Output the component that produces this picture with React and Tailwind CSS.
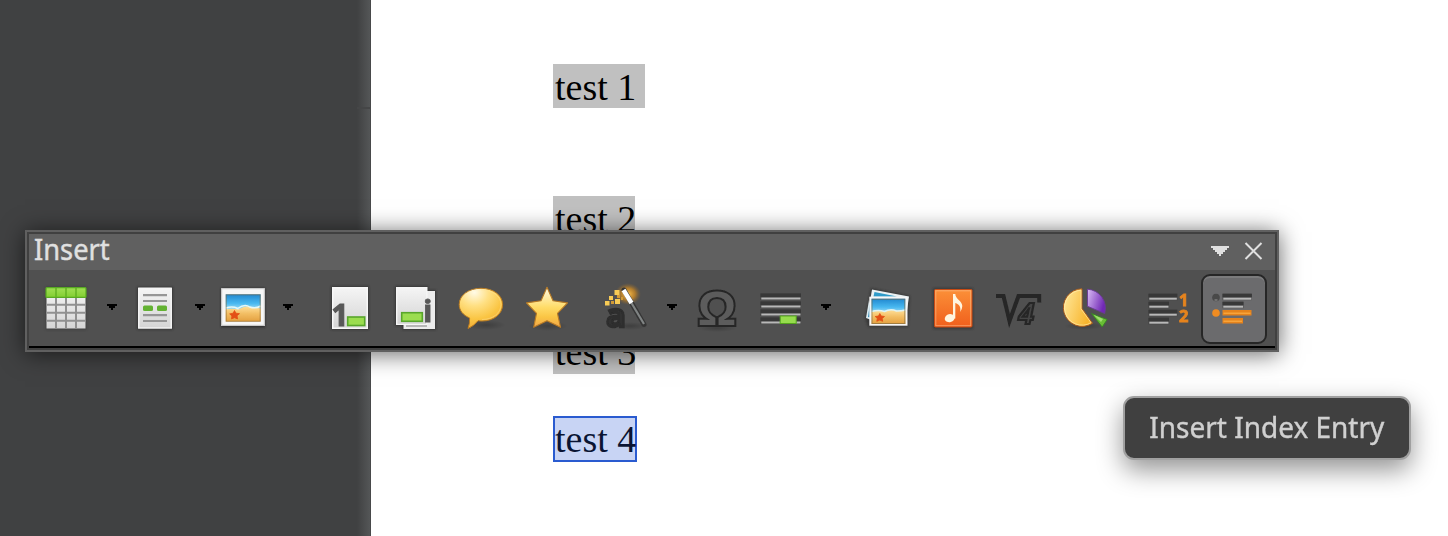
import React from "react";

function Icon({ children, className = "" }) {
  return (
    <svg viewBox="0 0 48 48" className={"h-12 w-12 shrink-0 overflow-visible " + className}>
      {children}
    </svg>
  );
}

function Drop() {
  return (
    <svg viewBox="0 0 40 48" className="h-12 w-10 shrink-0" shapeRendering="crispEdges">
      <path d="M17 20h10v2h-2v2h-2v2h-2v-2h-2v-2h-2z" fill="#000" />
    </svg>
  );
}

function Defs() {
  return (
    <svg className="absolute h-0 w-0">
      <defs>
        <linearGradient id="paper" x2="0" y2="1"><stop stopColor="#f4f4f4" /><stop offset="1" stopColor="#d5d5d5" /></linearGradient>
        <linearGradient id="head" x2="0" y2="1"><stop stopColor="#a0df55" /><stop offset="1" stopColor="#82cf30" /></linearGradient>
        <linearGradient id="sky" x2="0" y2="1"><stop stopColor="#2087cf" /><stop offset=".6" stopColor="#48b8f0" /><stop offset="1" stopColor="#9fdcf5" /></linearGradient>
        <linearGradient id="sand" x2="0" y2="1"><stop stopColor="#ffe09a" /><stop offset=".5" stopColor="#f2bd62" /><stop offset="1" stopColor="#e3a040" /></linearGradient>
        <linearGradient id="gold" x2="0" y2="1"><stop stopColor="#fffbe5" /><stop offset=".5" stopColor="#ffdc68" /><stop offset=".75" stopColor="#fac544" /><stop offset="1" stopColor="#f0a54a" /></linearGradient>
        <radialGradient id="bubble" cx=".35" cy=".1" r=".95"><stop stopColor="#fffbe8" /><stop offset=".35" stopColor="#ffe084" /><stop offset=".7" stopColor="#fac543" /><stop offset="1" stopColor="#efa936" /></radialGradient>
        <radialGradient id="glow"><stop stopColor="#ffc04a" /><stop offset=".55" stopColor="#c68625" stopOpacity=".8" /><stop offset="1" stopColor="#8a6530" stopOpacity="0" /></radialGradient>
        <linearGradient id="orange" x2="0" y2="1"><stop stopColor="#fb9038" /><stop offset="1" stopColor="#f05f1c" /></linearGradient>
        <linearGradient id="pie" x2="1" y2=".4"><stop stopColor="#ffeaa0" /><stop offset="1" stopColor="#f8b52d" /></linearGradient>
        <linearGradient id="violet" x2="1" y2=".4"><stop stopColor="#d9bdf5" /><stop offset="1" stopColor="#7128b5" /></linearGradient>
        <radialGradient id="shade"><stop stopColor="#000" stopOpacity=".22" /><stop offset="1" stopColor="#000" stopOpacity="0" /></radialGradient>
        <filter id="soft" x="-20%" y="-20%" width="140%" height="140%"><feGaussianBlur stdDeviation=".5" /></filter>
        <filter id="haze" x="-20%" y="-20%" width="140%" height="140%"><feGaussianBlur stdDeviation="1.2" /></filter>
      </defs>
    </svg>
  );
}

function TableIcon() {
  return (
    <Icon>
      <rect x="3.5" y="2.8" width="41" height="43" rx="1" fill="#303030" opacity=".5" filter="url(#haze)" />
      <g filter="url(#soft)">
        <rect x="4.5" y="4" width="39" height="40.5" fill="url(#paper)" />
        <path d="M13.500 13v31.500M23.500 13v31.500M33.500 13v31.500M4.500 20.700h39M4.500 28.700h39M4.500 36.700h39" stroke="#909090" strokeWidth="2" transform="translate(.5 0)" fill="none" />
        <rect x="4" y="3.600" width="40" height="9.800" rx="1" fill="url(#head)" stroke="#58aa20" strokeWidth="1.200" />
        <path d="M14 4v9M24 4v9M34 4v9" stroke="#62b322" strokeWidth="1.500" />
      </g>
    </Icon>
  );
}

function HeaderIcon() {
  return (
    <Icon>
      <rect x="7" y="2.800" width="36" height="43" rx="1" fill="#282828" opacity=".6" filter="url(#haze)" />
      <g filter="url(#soft)">
        <rect x="8" y="3.400" width="34" height="41.300" rx=".5" fill="#f4f4f4" />
        <rect x="9.500" y="5" width="31" height="38.300" fill="url(#paper)" />
        <path d="M13 11.200h24M13 17h24M13 31.200h24M13 37h24" stroke="#969696" strokeWidth="2.200" />
        <rect x="13" y="21.500" width="10" height="5.500" rx="1.500" fill="#64b233" />
        <rect x="27" y="21.500" width="10" height="5.500" rx="1.500" fill="#64b233" />
      </g>
    </Icon>
  );
}

function PictureIcon() {
  return (
    <Icon>
      <rect x="3" y="4" width="44" height="39.500" fill="#202020" opacity=".7" filter="url(#haze)" />
      <rect x="3" y="4" width="44" height="38" rx=".5" fill="#c8c8c8" />
      <rect x="4.200" y="5.200" width="41.600" height="35.600" fill="#f7f7f7" />
      <g filter="url(#soft)">
        <rect x="7.700" y="10.300" width="35" height="15" fill="url(#sky)" />
        <path d="M7.700 25.500q6-1.500 13 0q7-4 10-3l12 2v13h-35z" fill="url(#sand)" />
        <path d="M7.700 24q7-2 12 .5q7-5 12-1.500q6 2 11-1" fill="none" stroke="#e5f8f8" strokeWidth="1.500" />
        <path d="M16.500 26.500l1.400 2.700 3.600.5-2.500 2 .6 3.200-3.100-1.200-3 1.200.4-3-2.200-2 3.400-.7z" fill="#e34f14" stroke="#e34f14" strokeWidth=".8" />
        <rect x="8.200" y="10.800" width="34" height="26.500" fill="none" stroke="#84602c" strokeOpacity=".55" />
      </g>
    </Icon>
  );
}

function FootnoteIcon() {
  return (
    <Icon>
      <rect x="5" y="2" width="38" height="44" rx="1" fill="#282828" opacity=".55" filter="url(#haze)" />
      <g filter="url(#soft)">
        <rect x="6" y="3" width="36" height="42" fill="#f8f8f8" />
        <rect x="7.500" y="4.500" width="33" height="39" fill="url(#paper)" />
        <text x="5.500" y="41.500" fontSize="29.500" fontWeight="700" fill="#585858" stroke="#585858" strokeWidth="1.200" className="font-['Open_Sans',sans-serif]">1</text>
        <rect x="21.700" y="33" width="17" height="8.500" fill="#9bdd50" stroke="#58a62a" strokeWidth="1.600" />
      </g>
    </Icon>
  );
}

function EndnoteIcon() {
  return (
    <Icon>
      <path d="M3 2h33v4h8v40h-34v-4h-7z" fill="#282828" opacity=".6" filter="url(#haze)" />
      <g filter="url(#soft)">
        <rect x="11.500" y="7" width="31.500" height="38" fill="#ececec" />
        <path d="M14 42h21" stroke="#a5a5a5" strokeWidth="1.500" />
        <rect x="4" y="3" width="31.500" height="38" fill="#f6f6f6" />
        <rect x="5.400" y="4.400" width="28.800" height="35.400" fill="url(#paper)" />
        <text x="31" y="38" fontSize="31" fontWeight="700" fill="#585858" stroke="#585858" strokeWidth=".8" className="font-['Open_Sans',sans-serif]">i</text>
        <rect x="9.700" y="28.700" width="20.600" height="8.600" fill="#9bdd50" stroke="#58a62a" strokeWidth="1.600" />
      </g>
    </Icon>
  );
}

function CommentIcon() {
  return (
    <Icon>
      <ellipse cx="28" cy="41" rx="20" ry="5" fill="url(#shade)" />
      <path d="M23 4.300C35 4.300 44.600 11 44.600 20.500S36 37 24 37q-2 0-4-.3Q16 42 10 44.500q2-5 1.600-10.500C5 31 1.200 26.500 1.200 20.500 1.200 11 11 4.300 23 4.300z" fill="url(#bubble)" stroke="#b97b22" strokeWidth="1" />
      <path d="M23 5.800C34 5.800 43 12 43 20.500S35 35.500 24 35.500" fill="none" stroke="#ffe59a" strokeOpacity=".45" />
    </Icon>
  );
}

function StarIcon() {
  return (
    <Icon>
      <ellipse cx="24" cy="42" rx="20" ry="5" fill="url(#shade)" />
      <path d="M23 3.200L29 16.700l14.500 2.200-10 10.400 3 14-13.500-6.500-13.300 6.500 2.800-14L2.500 18.900 17 16.700z" fill="url(#gold)" stroke="#b87a25" strokeWidth="1.100" strokeLinejoin="round" />
    </Icon>
  );
}

function AutoTextIcon() {
  return (
    <Icon>
      <ellipse cx="26" cy="10" rx="13" ry="11" fill="url(#glow)" />
      <ellipse cx="28" cy="42" rx="18" ry="4" fill="url(#shade)" />
      <g filter="url(#soft)">
        <text x="4" y="42.500" fontSize="33" fontWeight="700" fill="#303030" stroke="#2d2d2d" strokeWidth="2.400" className="font-['Open_Sans',sans-serif]">a</text>
        <path d="M22 6L42 40.500" stroke="#353535" strokeWidth="5" strokeLinecap="round" />
        <path d="M22 6.500L42 40" stroke="#808484" strokeWidth="2.200" />
        <path d="M21.500 6L29.500 19" stroke="#fff" strokeWidth="4.500" />
        <path d="M3 17h4.500v4.500H3zM7 12h4v4H7zM12.500 6h5v5h-5zM13 15h5v5h-5z" fill="#f8cb55" />
        <path d="M9 17h3v3h-3zM15 11h3v3h-3zM19 13h2v3h-2z" fill="#d19a36" />
      </g>
    </Icon>
  );
}

function OmegaIcon() {
  return (
    <Icon>
      <ellipse cx="25" cy="44" rx="20" ry="4" fill="url(#shade)" />
      <g filter="url(#soft)">
        <text x="25" y="41" textAnchor="middle" fontSize="48" fontWeight="700" fill="#5c5c5c" stroke="#262626" strokeWidth="4" className="font-['Liberation_Sans',sans-serif] [paint-order:stroke]">Ω</text>
      </g>
    </Icon>
  );
}

function Bar({ x, y, w, hot }) {
  return hot ? (
    <>
      <rect x={x} y={y} width={w} height="5.500" fill="#e5831e" />
      <rect x={x + 1} y={y + 2.500} width={w - 2} height="1.500" fill="#f6a33b" />
    </>
  ) : (
    <>
      <rect x={x} y={y} width={w} height="6.500" fill="#333" opacity=".5" />
      <rect x={x} y={y} width={w} height="3.600" fill="#383838" />
      <rect x={x + 0.8} y={y + 4} width={w - 1.3} height="2" fill="#b8b8b8" />
    </>
  );
}

function LinesIcon() {
  return (
    <Icon>
      <g filter="url(#soft)">
        <Bar x={4.5} y={9.500} w={40.500} />
        <Bar x={4.5} y={17.500} w={40.500} />
        <Bar x={4.5} y={25.500} w={40.500} />
        <Bar x={4.5} y={33.500} w={40.500} />
        <rect x="24.200" y="32" width="16" height="7.500" fill="#96dc4e" stroke="#54a51f" strokeWidth="1" />
      </g>
    </Icon>
  );
}

function GalleryIcon() {
  return (
    <Icon>
      <path d="M7 4L46 12l-2 31H4L1 34z" fill="#202020" opacity=".5" filter="url(#haze)" />
      <path d="M5 16L2 34l8 3z" fill="#dcebf0" />
      <path d="M6 19L4 33l5 1z" fill="#3489b3" />
      <path d="M8 5.500L45 12.500l-2 14L5.500 20z" fill="#e9f0f2" />
      <path d="M10.500 8L33 12.500H9.500z" fill="#2f9bc9" />
      <rect x="5.300" y="12.700" width="38.200" height="29" fill="#f7f7f7" />
      <g filter="url(#soft)">
        <rect x="7.500" y="14.700" width="33.800" height="14" fill="url(#sky)" />
        <path d="M7.500 28q8-2 14-.5q6-3 12-.5l8-1v14H7.500z" fill="url(#sand)" />
        <path d="M7.500 27.500q7-2 13 0q6-3 12-.5q5 0 9-1" fill="none" stroke="#e0f4f4" strokeWidth="1.500" />
        <path d="M15.800 29.500l1.400 2.500 3.300.5-2.300 2 .5 2.800-2.900-1.200-3 1.200.5-2.800-2.100-2 3.300-.5z" fill="#e34f14" stroke="#e34f14" strokeWidth=".8" />
        <rect x="8" y="15.200" width="32.800" height="24.300" fill="none" stroke="#74643f" strokeOpacity=".6" />
      </g>
    </Icon>
  );
}

function MusicIcon() {
  return (
    <Icon>
      <rect x="3" y="4" width="40" height="41" fill="#222" opacity=".5" filter="url(#haze)" />
      <rect x="4.500" y="5.500" width="37.500" height="37.500" rx="1" fill="url(#orange)" stroke="#c84b14" />
      <rect x="5.800" y="6.800" width="34.900" height="34.900" fill="none" stroke="#ffc08c" strokeOpacity=".6" />
      <g filter="url(#soft)">
        <ellipse cx="19.700" cy="34.200" rx="5" ry="4" transform="rotate(-15 19.700 34.200)" fill="#fff5df" />
        <path d="M23 10h2.300c0 5 7 7 7 12q0 3-2.200 6c1.200-5-1-8-4.800-9v15.500H23z" fill="#fff5df" />
      </g>
    </Icon>
  );
}

function FormulaIcon() {
  return (
    <Icon>
      <g filter="url(#soft)">
        <path d="M0 12h7.500l6 25L22.500 12h20.700v6.500" fill="none" stroke="#252525" strokeWidth="4" />
        <text x="22.500" y="40" fontSize="28.500" fontWeight="700" fontStyle="italic" fill="#444" stroke="#262626" strokeWidth="2.200" className="font-['Open_Sans',sans-serif]">4</text>
      </g>
    </Icon>
  );
}

function PieIcon() {
  return (
    <Icon>
      <ellipse cx="22" cy="42" rx="20" ry="4" fill="url(#shade)" />
      <path d="M20 4.800V24.500L30.500 39.300A18.800 18.800 0 1 1 20 4.800z" fill="url(#pie)" stroke="#a85b1e" strokeWidth="1" />
      <path d="M19 6.200V24.800L29 38.700A17.500 17.500 0 1 1 19 6.200z" fill="none" stroke="#fff0b5" strokeOpacity=".6" />
      <path d="M25.500 5.200A19 19 0 0 1 42.700 29.500L25.500 22.300z" fill="url(#violet)" stroke="#6a3994" strokeWidth=".9" />
      <path d="M29.500 29.500L45.200 35.500 40.200 43z" fill="#69bd35" stroke="#358324" strokeWidth=".9" />
      <path d="M31.500 30.700L41 35l-2 3z" fill="#a2df72" />
    </Icon>
  );
}

function NumberingIcon() {
  return (
    <Icon>
      <g filter="url(#soft)">
        <Bar x={4.5} y={9.700} w={28.800} />
        <Bar x={4.5} y={17.700} w={20.500} />
        <Bar x={4.5} y={25.700} w={28.800} />
        <Bar x={4.5} y={33.700} w={20.500} />
      </g>
      <g filter="url(#soft)" fill="#e6841f" stroke="#e6841f" strokeWidth=".8" fontSize="16.500" fontWeight="700" className="font-['Open_Sans',sans-serif]">
        <text x="35" y="21.800">1</text>
        <text x="35" y="38.200">2</text>
      </g>
    </Icon>
  );
}

function IndexIcon() {
  return (
    <Icon>
      <g filter="url(#soft)">
        <circle cx="6" cy="13.500" r="3.800" fill="#484848" />
        <path d="M4.500 16h3" stroke="#999" />
        <Bar x={12.5} y={9.700} w={29.300} />
        <Bar x={12.5} y={17.700} w={21} />
        <circle cx="6" cy="29" r="3.800" fill="#f08c20" />
        <Bar x={12.5} y={26} w={29} hot />
        <Bar x={12.5} y={34} w={20.500} hot />
      </g>
    </Icon>
  );
}

function Field({ children, className }) {
  return <div className={"h-11 whitespace-pre bg-[#c0c0c0] pl-[2px] " + className}>{children}</div>;
}

function Toolbar() {
  return (
    <div className="absolute left-[25px] top-[230px] flex h-[122px] w-[1254px] flex-col border-2 border-[#606060] bg-[#404040] p-[2px] shadow-[0_2px_22px_rgba(0,0,0,0.6)]">
      <div className="flex h-9 shrink-0 items-center justify-between bg-[#606060] pl-[5px] pr-[11px] text-[#e0e0e0]">
        <span className="origin-left -translate-y-[3px] scale-x-[.94] whitespace-pre font-['Noto_Sans',sans-serif] text-[29px] leading-9 [-webkit-text-stroke:0.4px_#e0e0e0]">Insert</span>
        <svg viewBox="0 0 54 20" className="mb-0.5 h-5 w-[54px]">
          <path d="M1 5h18v2h-2v2h-2v2h-2v2h-2v2H9v-2H7v-2H5V9H3V7H1z" fill="#e0e0e0" shapeRendering="crispEdges" />
          <path d="M35.500 2l16 16M51.500 2l-16 16" stroke="#e0e0e0" strokeWidth="2" />
        </svg>
      </div>
      <div className="flex h-[78px] shrink-0 items-center border-b-2 border-black bg-[#505050] pl-[13px]">
        <TableIcon /><Drop />
        <HeaderIcon /><Drop />
        <PictureIcon /><Drop />
        <div className="ml-5 mr-[30px] flex gap-[18px]">
          <FootnoteIcon /><EndnoteIcon /><CommentIcon /><StarIcon />
        </div>
        <AutoTextIcon /><Drop />
        <div className="ml-0.5 mr-4 flex"><OmegaIcon /></div>
        <LinesIcon /><Drop />
        <div className="ml-5 flex gap-[18px]">
          <GalleryIcon /><MusicIcon /><FormulaIcon /><PieIcon />
        </div>
        <div className="ml-[34px] flex"><NumberingIcon /></div>
        <div className="ml-[9px] mt-0.5 flex h-[70px] w-[66px] justify-center rounded-[9px] border-2 border-[#262626] bg-[#6b6b6d] pt-2 shadow-[inset_0_2px_0_#7b7b7c]">
          <IndexIcon />
        </div>
      </div>
    </div>
  );
}

export default function App() {
  return (
    <div className="relative flex h-[536px] w-[1448px] overflow-hidden bg-white">
      <Defs />
      <aside className="flex h-full w-[371px] shrink-0 justify-end bg-[#404142]">
        <div className="h-full w-[14px] border-r border-[#48494a] bg-linear-to-r from-[#404142] to-[#545657] pt-[107px]">
          <div className="h-[2px] bg-[#454647]" />
        </div>
      </aside>
      <main className="flex flex-col items-start pl-[182px] pt-16 font-['Liberation_Serif',serif] text-[38px] leading-[44px] text-black">
        <Field className="w-[92px] pt-px">test 1</Field>
        <Field className="mt-[88px] w-[82px] pt-px">test 2</Field>
        <Field className="mt-[90px] w-[82px]">test 3</Field>
        <div className="mt-[42px] h-[46px] w-[84px] whitespace-pre border-2 border-[#2a5bd0] bg-[#c8d4f4] leading-[43px] text-[#0a1433]">test 4</div>
      </main>
      <Toolbar />
      <div className="absolute left-[1123px] top-[396px] flex h-16 w-[288px] items-center justify-center whitespace-pre rounded-[11px] border-2 border-[#a0a0a0] bg-[#404040] pb-0.5 font-['Noto_Sans',sans-serif] text-[29px] text-[#d0d0d0] shadow-[0_10px_26px_rgba(0,0,0,0.42)]">
        <span className="scale-x-[.965] [-webkit-text-stroke:0.4px_#d0d0d0]">Insert Index Entry</span>
      </div>
    </div>
  );
}
